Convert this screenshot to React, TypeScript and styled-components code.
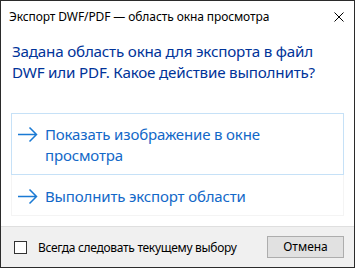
import styled, {createGlobalStyle} from 'styled-components';

const GlobalStyle = createGlobalStyle`
  html, body {
    margin: 0;
    padding: 0;
    background: #ffffff;
  }
  * {
    box-sizing: border-box;
  }
`;

const Window = styled.div`
  width: 355px;
  height: 268px;
  border: 1px solid #2b2b2b;
  background: #ffffff;
  display: flex;
  flex-direction: column;
  font-family: 'Noto Sans', 'Open Sans', sans-serif;
  color: #000;
`;

const TitleBar = styled.div`
  height: 30px;
  flex: none;
  display: flex;
  align-items: center;
  justify-content: space-between;
  padding: 0 10px 0 8px;
  font-size: 12px;
`;

const Title = styled.span`
  white-space: nowrap;
  letter-spacing: -0.1px;
`;

const CloseIcon = () => (
  <svg width="10" height="10" viewBox="0 0 10 10" style={{marginTop: 2}}>
    <path d="M0.5 0.5 L9.5 9.5 M9.5 0.5 L0.5 9.5" stroke="#000" strokeWidth="1" fill="none" />
  </svg>
);

const Body = styled.div`
  flex: 1;
  display: flex;
  flex-direction: column;
  padding: 10px 10px 0 10px;
`;

const Heading = styled.div`
  font-size: 15.2px;
  line-height: 21px;
  color: #003399;
  padding-left: 1px;
  margin-bottom: 30px;
  letter-spacing: -0.2px;
`;

const CommandLink = styled.div<{$hot?: boolean}>`
  display: flex;
  align-items: flex-start;
  gap: 7px;
  padding: ${(p) => (p.$hot ? '10px 8px 8px 6px' : '11px 8px 8px 6px')};
  border: 1px solid ${(p) => (p.$hot ? '#c6e1f7' : '#f4f4f4')};
  ${(p) => (p.$hot ? '' : 'border-top: none;')}
  font-size: 15px;
  line-height: 21px;
  color: #1268c8;
`;

const LinkText = styled.span`
  letter-spacing: -0.15px;
`;

const Arrow = () => (
  <svg width="20" height="21" viewBox="0 0 20 21" style={{flex: 'none'}}>
    <path d="M0 10.5 H18.5 M11.5 3.5 L18.5 10.5 L11.5 17.5" stroke="#1a7ad4" strokeWidth="1.5" fill="none" />
  </svg>
);

const Footer = styled.div`
  height: 41px;
  flex: none;
  border-top: 1px solid #dfdfdf;
  background: #f0f0f0;
  display: flex;
  align-items: center;
  justify-content: space-between;
  padding: 0 10px 0 13px;
  font-size: 12px;
`;

const CheckRow = styled.label`
  display: flex;
  align-items: center;
  gap: 11px;
`;

const Box = styled.span`
  width: 13px;
  height: 13px;
  border: 1px solid #333333;
  background: #ffffff;
  margin-top: 1px;
`;

const CheckLabel = styled.span`
  letter-spacing: -0.3px;
`;

const Button = styled.button`
  width: 77px;
  height: 22px;
  border: 1px solid #adadad;
  background: #e1e1e1;
  font-family: inherit;
  font-size: 12px;
  color: #000;
  padding: 0;
  margin-bottom: 1px;
`;

export default function App() {
  return (
    <>
      <GlobalStyle />
      <Window>
        <TitleBar>
          <Title>Экспорт DWF/PDF — область окна просмотра</Title>
          <CloseIcon />
        </TitleBar>
        <Body>
          <Heading>
            Задана область окна для экспорта в файл DWF или PDF. Какое действие выполнить?
          </Heading>
          <CommandLink $hot>
            <Arrow />
            <LinkText>
              Показать изображение в окне
              <br />
              просмотра
            </LinkText>
          </CommandLink>
          <CommandLink>
            <Arrow />
            <LinkText>Выполнить экспорт области</LinkText>
          </CommandLink>
        </Body>
        <Footer>
          <CheckRow>
            <Box />
            <CheckLabel>Всегда следовать текущему выбору</CheckLabel>
          </CheckRow>
          <Button>Отмена</Button>
        </Footer>
      </Window>
    </>
  );
}
